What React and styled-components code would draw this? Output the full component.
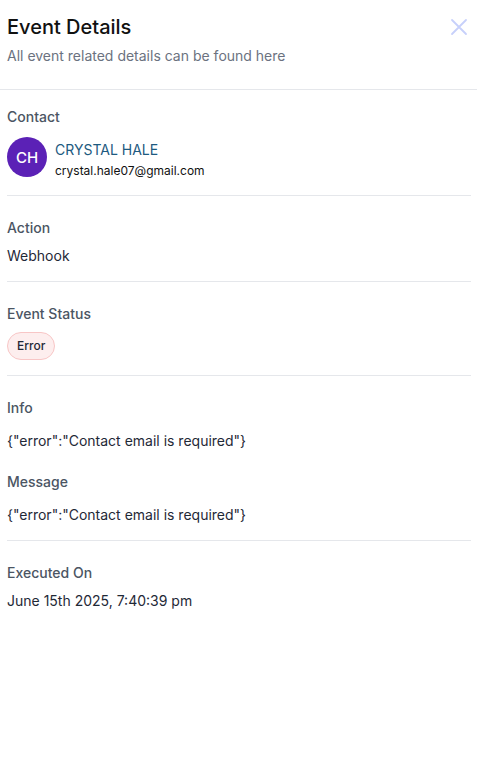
import React from "react";
import styled, { createGlobalStyle } from "styled-components";

const GlobalStyle = createGlobalStyle`
  body {
    margin: 0;
    background: #ffffff;
    font-family: Inter, "Noto Sans", sans-serif;
    color: #1f2937;
  }
`;

const Panel = styled.div`
  width: 477px;
  min-height: 783px;
  background: #ffffff;
`;

const Header = styled.div`
  display: flex;
  justify-content: space-between;
  align-items: flex-start;
  padding: 15px 6px 23px 7px;
  border-bottom: 1px solid #e5e7eb;
`;

const Title = styled.h2`
  margin: 0;
  font-size: 20px;
  font-weight: 500;
  line-height: 24px;
  color: #111111;
`;

const Subtitle = styled.p`
  margin: 7px 0 0;
  font-size: 14px;
  line-height: 20px;
  color: #6b7280;
`;

const CloseButton = styled.button`
  border: none;
  background: none;
  padding: 0;
  width: 24px;
  height: 24px;
  color: #c7d0fb;
  cursor: pointer;
`;

const Body = styled.div`
  padding: 0 6px 0 7px;
`;

const Section = styled.div`
  padding: ${(p) => p.$top || 22}px 0 ${(p) => p.$bottom || 15}px;
  border-bottom: ${(p) => (p.$last ? "none" : "1px solid #e5e7eb")};
`;

const Label = styled.div`
  font-size: 14px;
  font-weight: 500;
  line-height: 20px;
  color: #4b5563;
  margin-top: ${(p) => p.$gap || 0}px;
`;

const Value = styled.div`
  font-size: 14px;
  line-height: 20px;
  color: #1f2937;
  margin-top: ${(p) => p.$gap || 8}px;
`;

const ContactRow = styled.div`
  display: flex;
  align-items: flex-start;
  gap: 8px;
  margin-top: 10px;
`;

const ContactText = styled.div`
  padding-top: 3px;
`;

const Avatar = styled.div`
  width: 40px;
  height: 40px;
  border-radius: 50%;
  background: #5b21b6;
  color: #ffffff;
  display: flex;
  align-items: center;
  justify-content: center;
  font-size: 15px;
  font-weight: 500;
`;

const ContactName = styled.div`
  font-size: 14px;
  line-height: 20px;
  color: #1d5a80;
`;

const ContactEmail = styled.div`
  font-size: 12px;
  line-height: 16px;
  color: #111111;
  margin-top: 3px;
`;

const Badge = styled.span`
  display: inline-block;
  margin-top: 8px;
  padding: 4px 9px;
  font-size: 12px;
  font-weight: 500;
  line-height: 18px;
  color: #1f2937;
  background: #fdeeee;
  border: 1px solid #f8c6c6;
  border-radius: 999px;
`;

export default function App() {
  return (
    <>
      <GlobalStyle />
      <Panel>
        <Header>
          <div>
            <Title>Event Details</Title>
            <Subtitle>All event related details can be found here</Subtitle>
          </div>
          <CloseButton aria-label="Close">
            <svg viewBox="0 0 24 24" width="24" height="24" fill="none" stroke="currentColor" strokeWidth="1.8" strokeLinecap="round">
              <path d="M5 5l14 14M19 5L5 19" />
            </svg>
          </CloseButton>
        </Header>
        <Body>
          <Section $top={17} $bottom={16}>
            <Label>Contact</Label>
            <ContactRow>
              <Avatar>CH</Avatar>
              <ContactText>
                <ContactName>CRYSTAL HALE</ContactName>
                <ContactEmail>crystal.hale07@gmail.com</ContactEmail>
              </ContactText>
            </ContactRow>
          </Section>
          <Section>
            <Label>Action</Label>
            <Value>Webhook</Value>
          </Section>
          <Section $bottom={15}>
            <Label>Event Status</Label>
            <Badge>Error</Badge>
          </Section>
          <Section>
            <Label>Info</Label>
            <Value $gap={13}>{'{"error":"Contact email is required"}'}</Value>
            <Label $gap={21}>Message</Label>
            <Value $gap={13}>{'{"error":"Contact email is required"}'}</Value>
          </Section>
          <Section $last>
            <Label>Executed On</Label>
            <Value>June 15th 2025, 7:40:39 pm</Value>
          </Section>
        </Body>
      </Panel>
    </>
  );
}
